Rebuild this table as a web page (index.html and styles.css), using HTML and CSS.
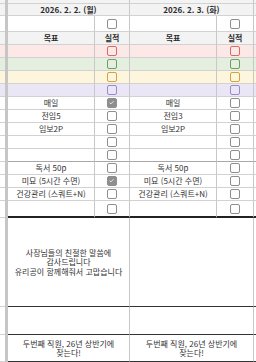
FILE: index.html
```html
<!DOCTYPE html>
<html lang="ko">
<head>
<meta charset="utf-8">
<link rel="stylesheet" href="styles.css">
</head>
<body>
<div class="sheet">
  <div class="row r-top">
    <div class="c s"></div><div class="dv"></div><div class="c d1"></div><div class="c d2"></div><div class="c x"></div>
  </div>
  <div class="row r-date gray">
    <div class="c s"></div><div class="dv"></div>
    <div class="c d1 b">2026. 2. 2. (월)</div>
    <div class="c d2 b">2026. 2. 3. (화)</div>
    <div class="c x"></div>
  </div>
  <div class="row r-cb">
    <div class="c s"></div><div class="dv"></div>
    <div class="c g1"></div><div class="c c1"><span class="cb"></span></div>
    <div class="c g2"></div><div class="c c2"><span class="cb"></span></div>
    <div class="c x"></div>
  </div>
  <div class="row r-n gray">
    <div class="c s"></div><div class="dv"></div>
    <div class="c g1 b">목표</div><div class="c c1 b">실적</div>
    <div class="c g2 b">목표</div><div class="c c2 b">실적</div>
    <div class="c x"></div>
  </div>
  <div class="row r-n pink">
    <div class="c s"></div><div class="dv"></div>
    <div class="c g1"></div><div class="c c1"><span class="cb red"></span></div>
    <div class="c g2"></div><div class="c c2"><span class="cb red"></span></div>
    <div class="c x"></div>
  </div>
  <div class="row r-n green">
    <div class="c s"></div><div class="dv"></div>
    <div class="c g1"></div><div class="c c1"><span class="cb grn"></span></div>
    <div class="c g2"></div><div class="c c2"><span class="cb grn"></span></div>
    <div class="c x"></div>
  </div>
  <div class="row r-n yellow">
    <div class="c s"></div><div class="dv"></div>
    <div class="c g1"></div><div class="c c1"><span class="cb ylw"></span></div>
    <div class="c g2"></div><div class="c c2"><span class="cb ylw"></span></div>
    <div class="c x"></div>
  </div>
  <div class="row r-n purple">
    <div class="c s"></div><div class="dv"></div>
    <div class="c g1"></div><div class="c c1"><span class="cb prp"></span></div>
    <div class="c g2"></div><div class="c c2"><span class="cb prp"></span></div>
    <div class="c x"></div>
  </div>
  <div class="row r-n">
    <div class="c s"></div><div class="dv"></div>
    <div class="c g1">매일</div><div class="c c1"><span class="cb on"><svg viewBox="0 0 10 10"><path d="M2.3 5.2 L4.2 7 L7.8 3.2" fill="none" stroke="#fff" stroke-width="1.1"/></svg></span></div>
    <div class="c g2">매일</div><div class="c c2"><span class="cb"></span></div>
    <div class="c x"></div>
  </div>
  <div class="row r-n">
    <div class="c s"></div><div class="dv"></div>
    <div class="c g1">전임5</div><div class="c c1"><span class="cb"></span></div>
    <div class="c g2">전임3</div><div class="c c2"><span class="cb"></span></div>
    <div class="c x"></div>
  </div>
  <div class="row r-n">
    <div class="c s"></div><div class="dv"></div>
    <div class="c g1">임보2P</div><div class="c c1"><span class="cb"></span></div>
    <div class="c g2">임보2P</div><div class="c c2"><span class="cb"></span></div>
    <div class="c x"></div>
  </div>
  <div class="row r-n">
    <div class="c s"></div><div class="dv"></div>
    <div class="c g1"></div><div class="c c1"><span class="cb"></span></div>
    <div class="c g2"></div><div class="c c2"><span class="cb"></span></div>
    <div class="c x"></div>
  </div>
  <div class="row r-n">
    <div class="c s"></div><div class="dv"></div>
    <div class="c g1 dk"></div><div class="c c1 dk"><span class="cb"></span></div>
    <div class="c g2 dk"></div><div class="c c2 dk"><span class="cb"></span></div>
    <div class="c x dk"></div>
  </div>
  <div class="row r-n">
    <div class="c s"></div><div class="dv"></div>
    <div class="c g1">독서 50p</div><div class="c c1"><span class="cb"></span></div>
    <div class="c g2">독서 50p</div><div class="c c2"><span class="cb"></span></div>
    <div class="c x"></div>
  </div>
  <div class="row r-n">
    <div class="c s"></div><div class="dv"></div>
    <div class="c g1">미묘 (5시간 수면)</div><div class="c c1"><span class="cb on"><svg viewBox="0 0 10 10"><path d="M2.3 5.2 L4.2 7 L7.8 3.2" fill="none" stroke="#fff" stroke-width="1.1"/></svg></span></div>
    <div class="c g2">미묘 (5시간 수면)</div><div class="c c2"><span class="cb"></span></div>
    <div class="c x"></div>
  </div>
  <div class="row r-n">
    <div class="c s"></div><div class="dv"></div>
    <div class="c g1">건강관리 (스쿼트+N)</div><div class="c c1"><span class="cb"></span></div>
    <div class="c g2">건강관리 (스쿼트+N)</div><div class="c c2"><span class="cb"></span></div>
    <div class="c x"></div>
  </div>
  <div class="row r-last">
    <div class="c s"></div><div class="dv"></div>
    <div class="c g1 thick"></div><div class="c c1 thick"><span class="cb"></span></div>
    <div class="c g2 thick"></div><div class="c c2 thick"><span class="cb"></span></div>
    <div class="c x thick"></div>
  </div>
  <div class="row r-big">
    <div class="c s"></div><div class="dv"></div>
    <div class="c d1 blk">사장님들의 친절한 말씀에<br>감사드립니다<br>유리공이 함께해줘서 고맙습니다</div>
    <div class="c d2 blk"></div>
    <div class="c x blk"></div>
  </div>
  <div class="row r-mid">
    <div class="c s"></div><div class="dv"></div>
    <div class="c d1 blk"></div>
    <div class="c d2 blk"></div>
    <div class="c x blk"></div>
  </div>
  <div class="row r-bot">
    <div class="c s"></div><div class="dv"></div>
    <div class="c d1 blk">두번째 직원, 26년 상반기에<br>찾는다!</div>
    <div class="c d2 blk">두번째 직원, 26년 상반기에<br>찾는다!</div>
    <div class="c x blk"></div>
  </div>
  <div class="row r-n pink">
    <div class="c s"></div><div class="dv"></div>
    <div class="c g1"></div><div class="c c1"></div>
    <div class="c g2"></div><div class="c c2"></div>
    <div class="c x"></div>
  </div>
</div>
</body>
</html>
```

FILE: styles.css
```css
* { box-sizing: border-box; }
html, body {
  margin: 0;
  padding: 0;
  background: #fff;
  overflow: hidden;
}
.sheet {
  width: 256px;
  height: 362px;
  overflow: hidden;
  font-family: "Noto Sans CJK KR", "Noto Sans", sans-serif;
  font-size: 8px;
  color: #333;
}
.row {
  display: flex;
  align-items: stretch;
}
.r-top { height: 4px; background: #f3f3f3; }
.r-date { height: 12px; }
.r-cb { height: 16px; }
.r-n { height: 13px; }
.r-last { height: 17px; }
.r-big { height: 89px; }
.r-mid { height: 28px; }
.r-bot { height: 27px; }

.gray { background: #f3f3f3; }
.pink { background: #fce8e7; }
.green { background: #e5efdf; }
.yellow { background: #fdf5dc; }
.purple { background: #ebe6f6; }

.c {
  display: flex;
  align-items: center;
  justify-content: center;
  text-align: center;
  line-height: 9.5px;
  white-space: nowrap;
  border-bottom: 1px solid #d2d2d2;
}
.s { width: 5px; }
.dv { width: 3px; background: #c6c6c6; }
.g1 { width: 87px; border-right: 1px solid #c8c8c8; }
.c1 { width: 35px; border-right: 1px solid #c8c8c8; }
.g2 { width: 87px; border-right: 1px solid #c8c8c8; }
.c2 { width: 37px; border-right: 1px solid #c8c8c8; }
.d1 { width: 122px; border-right: 1px solid #c8c8c8; }
.d2 { width: 124px; border-right: 1px solid #c8c8c8; }
.x { flex: 1; }
.b { font-weight: 700; color: #2b2b2b; }
.dk { border-bottom-color: #a8a8a8; }
.thick { border-bottom: 2px solid #222; }
.blk { border-bottom: 1px solid #333; }

.cb {
  display: block;
  width: 10px;
  height: 10px;
  border: 1.5px solid #8e8e8e;
  border-radius: 2px;
  background: #fff;
}
.cb.red { border-color: #e06666; background: transparent; }
.cb.grn { border-color: #6f9e5f; background: transparent; }
.cb.ylw { border-color: #d4a23e; background: transparent; }
.cb.prp { border-color: #9a8ad0; background: transparent; }
.cb.on {
  background: #8e8e8e;
  position: relative;
}
.cb.on svg {
  display: block;
  width: 7px;
  height: 7px;
}
```
